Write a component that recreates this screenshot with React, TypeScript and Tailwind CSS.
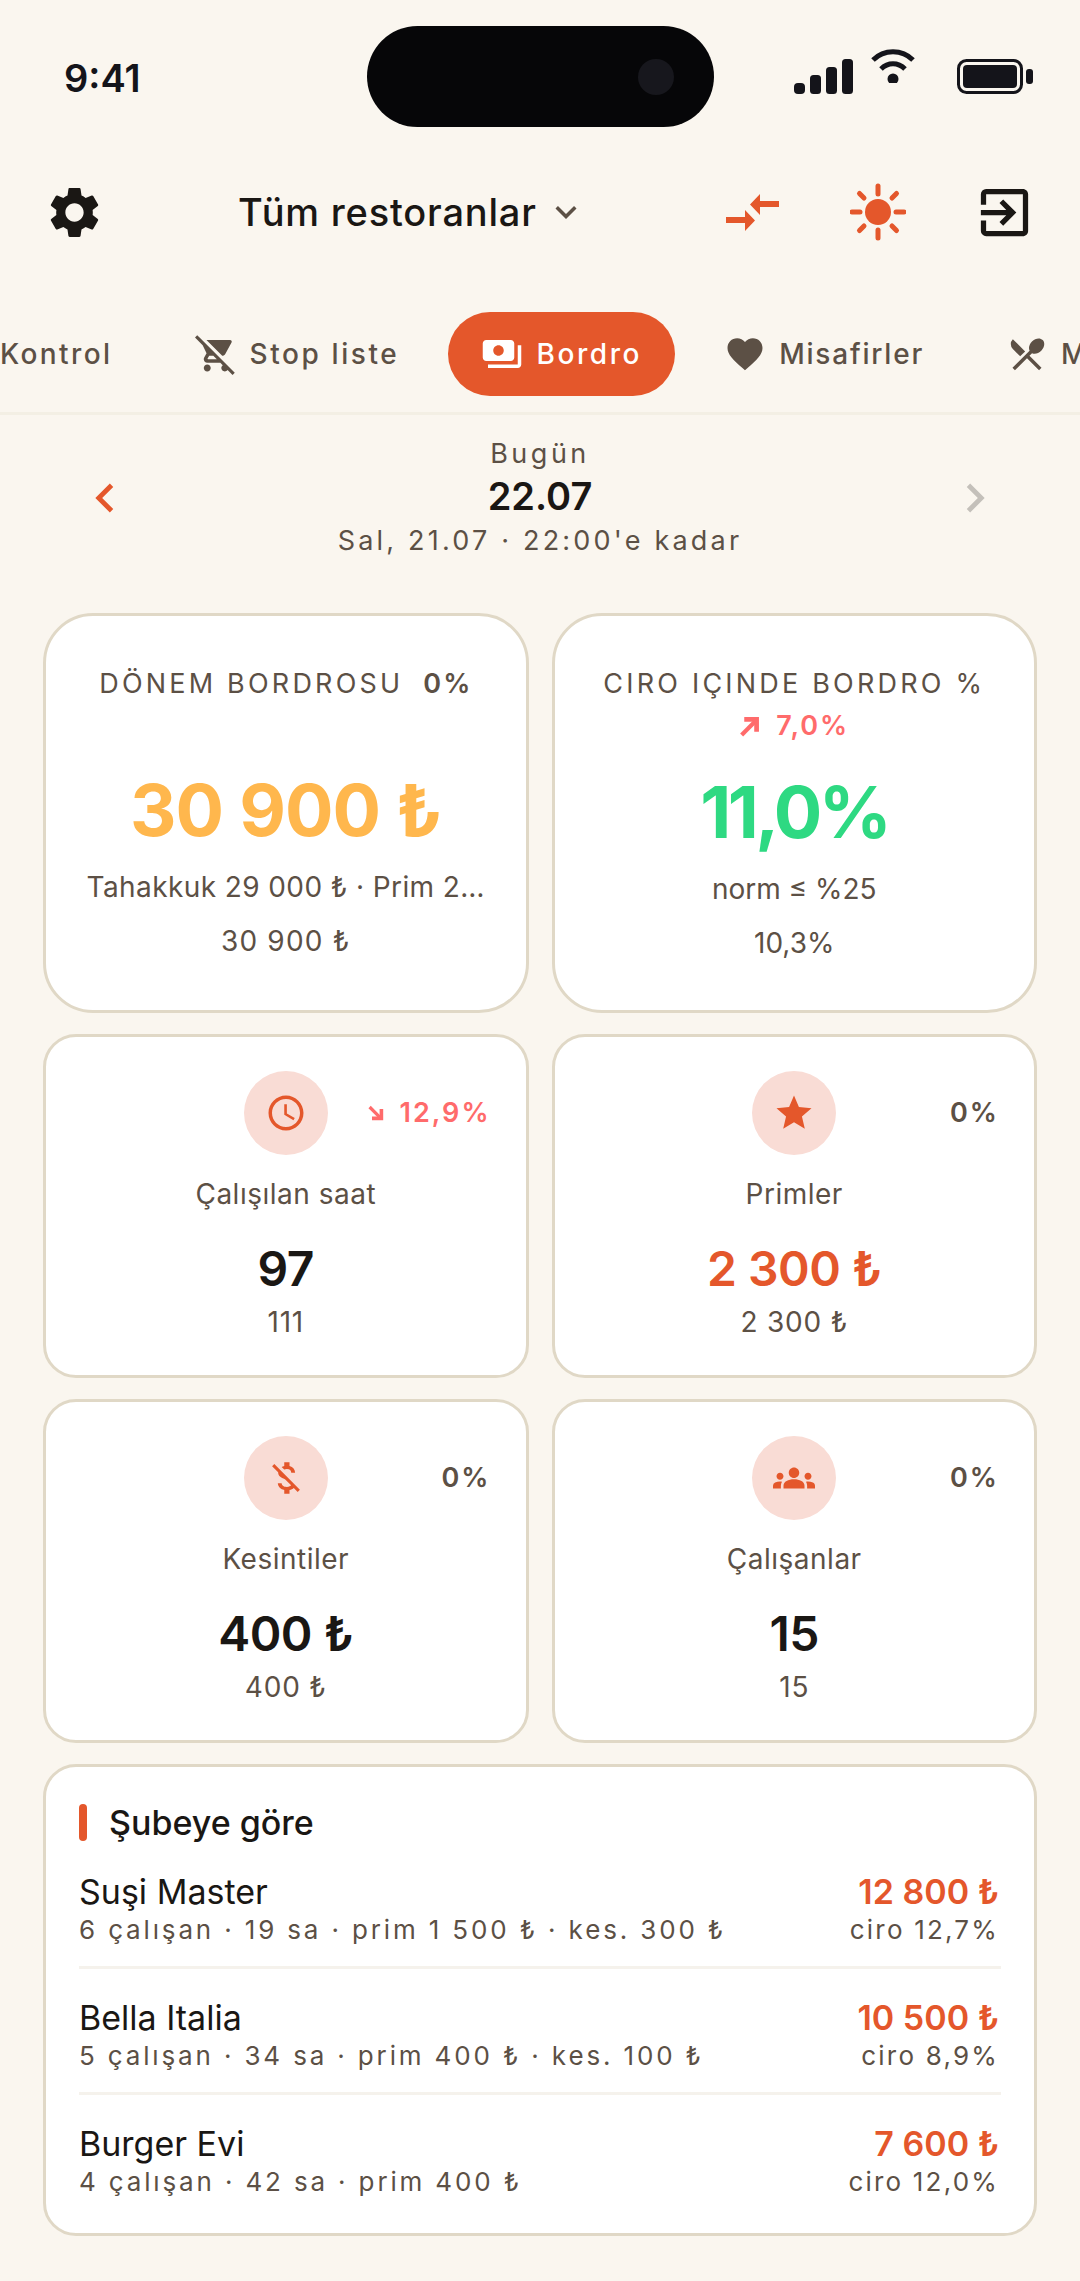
import {
  MdAccessTime,
  MdChevronLeft,
  MdChevronRight,
  MdExitToApp,
  MdFavorite,
  MdGroups,
  MdKeyboardArrowDown,
  MdMoneyOff,
  MdPayments,
  MdRemoveShoppingCart,
  MdRestaurantMenu,
  MdSettings,
  MdStar,
} from "react-icons/md";
import type { ReactNode } from "react";

const branches = [
  { name: "Suşi Master", meta: "6 çalışan · 19 sa · prim 1 500 ₺ · kes. 300 ₺", total: "12 800 ₺", share: "ciro 12,7%" },
  { name: "Bella Italia", meta: "5 çalışan · 34 sa · prim 400 ₺ · kes. 100 ₺", total: "10 500 ₺", share: "ciro 8,9%" },
  { name: "Burger Evi", meta: "4 çalışan · 42 sa · prim 400 ₺", total: "7 600 ₺", share: "ciro 12,0%" },
];

function StatusIcons() {
  return (
    <div className="flex items-start pt-[52px]">
      {/* signal */}
      <svg width="60" height="36" viewBox="0 0 60 36" className="mt-[7px] fill-[#14141a]">
        <rect x="0" y="24" width="11" height="11" rx="4" />
        <rect x="16" y="16" width="11" height="19" rx="3.5" />
        <rect x="32" y="8" width="11" height="27" rx="3.5" />
        <rect x="48" y="0" width="11" height="35" rx="3.5" />
      </svg>
      {/* wifi */}
      <svg width="44" height="36" viewBox="0 0 44 36" className="ml-[17px] mt-[-5px]">
        <path d="M2 13 C13 2 31 2 42 13" fill="none" stroke="#14141a" strokeWidth="5" />
        <path d="M10 22 C17 15 27 15 34 22" fill="none" stroke="#14141a" strokeWidth="5" />
        <circle cx="22" cy="32" r="5.5" fill="#14141a" />
      </svg>
      {/* battery */}
      <svg width="77" height="36" viewBox="0 0 77 36" className="ml-[42px] mt-[7px]">
        <rect x="1.5" y="1.5" width="63" height="32" rx="8" fill="none" stroke="#14141a" strokeWidth="3" />
        <rect x="6" y="6" width="54" height="23" rx="4" fill="#14141a" />
        <rect x="69" y="10" width="7" height="15" rx="3" fill="#14141a" />
      </svg>
    </div>
  );
}

function MergeArrows() {
  return (
    <svg width="54" height="40" viewBox="0 0 54 40" className="fill-[#e4572b]">
      <path d="M53 9H34V2L24 12.5 34 23v-8h19z" />
      <path d="M0 25h19v-7l10 10.5L19 39v-8H0z" />
    </svg>
  );
}

function SunIcon() {
  const rays = [
    [28, 2, 28, 10],
    [28, 46, 28, 54],
    [2, 28, 10, 28],
    [46, 28, 54, 28],
    [9.5, 9.5, 14, 14],
    [42, 42, 46.5, 46.5],
    [46.5, 9.5, 42, 14],
    [14, 42, 9.5, 46.5],
  ];
  return (
    <svg width="56" height="58" viewBox="0 0 56 56">
      <circle cx="28" cy="28" r="13" fill="#e4572b" />
      {rays.map((r) => (
        <line key={r.join()} x1={r[0]} y1={r[1]} x2={r[2]} y2={r[3]} stroke="#e4572b" strokeWidth="5" strokeLinecap="round" />
      ))}
    </svg>
  );
}

function TrendArrow({ dir, size }: { dir: "up" | "down"; size: number }) {
  return (
    <svg width={size} height={size} viewBox="0 0 20 20" className={dir === "down" ? "rotate-90" : ""}>
      <path d="M2.5 18 16 4.5" fill="none" stroke="#ff6b6b" strokeWidth="4" />
      <path d="M5 1h14v14h-4.5V5.5H5z" fill="#ff6b6b" />
    </svg>
  );
}

function Tab({
  icon,
  label,
  active,
  tracking = "tracking-[2.6px]",
}: {
  icon: ReactNode;
  label: string;
  active?: boolean;
  tracking?: string;
}) {
  return (
    <div
      className={`flex h-[84px] shrink-0 items-center gap-[13px] rounded-full px-[33px] text-[28px] font-medium ${tracking} ${
        active ? "bg-[#e4572b] text-white" : "text-[#5c5045]"
      }`}
    >
      {icon}
      <span>{label}</span>
    </div>
  );
}

function Delta({ dir, value, size = 16 }: { dir?: "up" | "down"; value: string; size?: number }) {
  return (
    <div
      className={`flex items-center justify-center gap-[16px] text-[27px] font-semibold tracking-[2px] ${
        dir ? "text-[#ff6b6b]" : "text-[#5c5045]"
      }`}
    >
      {dir && <TrendArrow dir={dir} size={size} />}
      <span>{value}</span>
    </div>
  );
}

function StatCard({
  icon,
  label,
  value,
  sub,
  delta,
  valueColor = "text-[#1a1714]",
}: {
  icon: ReactNode;
  label: string;
  value: string;
  sub: string;
  delta: ReactNode;
  valueColor?: string;
}) {
  return (
    <div className="relative flex h-[344px] flex-col items-center rounded-[33px] border-[3px] border-[#e0d8c6] bg-white pt-[34px]">
      <div className="absolute right-[35px] top-[56px]">{delta}</div>
      <div className="flex h-[84px] w-[84px] items-center justify-center rounded-full bg-[#f9dcd5] text-[#e4572b]">{icon}</div>
      <div className="mt-[21px] text-[28px] leading-[36px] tracking-[0.5px] text-[#5c5045]">{label}</div>
      <div className={`mt-[29px] text-[48px] font-semibold leading-[56px] tracking-[-0.5px] ${valueColor}`}>{value}</div>
      <div className="mt-[7px] text-[28px] leading-[36px] tracking-[0.8px] text-[#5c5045]">{sub}</div>
    </div>
  );
}

export default function App() {
  return (
    <div className="h-[2281px] w-[1080px] overflow-hidden bg-[#faf6ef] font-['Inter',sans-serif]">
      {/* Status bar */}
      <div className="flex h-[127px] items-start">
        <div className="w-[367px] pl-[64px] pt-[54px] text-[38px] font-semibold leading-[48px] text-[#14141a]">9:41</div>
        <div className="mt-[26px] flex h-[101px] w-[347px] items-center justify-end rounded-full bg-[#060608] pr-[40px]">
          <div className="h-[36px] w-[36px] rounded-full bg-[#17171d]" />
        </div>
        <div className="ml-[80px]">
          <StatusIcons />
        </div>
      </div>

      {/* Header */}
      <div className="mt-[35px] flex h-[100px] items-center">
        <MdSettings size={61} className="ml-[44px] text-[#1a1714]" />
        <div className="ml-[133px] text-[38px] font-medium tracking-[0.8px] text-[#1a1714]">Tüm restoranlar</div>
        <MdKeyboardArrowDown size={42} className="ml-[8px] text-[#5c5045]" />
        <div className="ml-[139px]">
          <MergeArrows />
        </div>
        <div className="ml-[70px]">
          <SunIcon />
        </div>
        <MdExitToApp size={63} className="ml-[67px] text-[#1a1714]" />
      </div>

      {/* Tabs */}
      <div className="mt-[50px] flex gap-[16px] overflow-hidden border-b-[3px] border-[#f3efe4] pb-[16px]">
        <div className="ml-[-33px]">
          <Tab label="Kontrol" tracking="tracking-[2.4px]" icon={null} />
        </div>
        <Tab label="Stop liste" icon={<MdRemoveShoppingCart size={42} />} />
        <Tab active label="Bordro" icon={<MdPayments size={42} />} />
        <Tab label="Misafirler" tracking="tracking-[1.8px]" icon={<MdFavorite size={42} />} />
        <Tab label="Menü" icon={<MdRestaurantMenu size={42} />} />
      </div>

      {/* Date switcher */}
      <div className="mt-[18px] flex h-[130px] items-center justify-between px-[76px]">
        <MdChevronLeft size={58} className="text-[#e4572b]" />
        <div className="flex flex-col items-center">
          <div className="text-[27px] leading-[38px] tracking-[3.5px] text-[#5c5045]">Bugün</div>
          <div className="text-[38px] font-semibold leading-[46px] text-[#1a1714]">22.07</div>
          <div className="mt-[2px] text-[27px] leading-[40px] tracking-[3.2px] text-[#5c5045]">Sal, 21.07 · 22:00'e kadar</div>
        </div>
        <MdChevronRight size={58} className="text-[#c4c0ba]" />
      </div>

      {/* Totals */}
      <div className="mt-[50px] grid grid-cols-2 gap-x-[23px] gap-y-[21px] px-[43px]">
        <div className="flex h-[400px] flex-col items-center rounded-[50px] border-[3px] border-[#e0d8c6] bg-white pt-[50px]">
          <div className="flex h-[36px] items-center gap-[20px] text-[27px] leading-[36px] tracking-[3.2px] text-[#5c5045]">
            <span>DÖNEM BORDROSU</span>
            <Delta value="0%" />
          </div>
          <div className="mt-[68px] text-[72px] font-bold leading-[80px] tracking-[-1px] text-[#ffb74d]">30 900 ₺</div>
          <div className="mt-[18px] whitespace-nowrap text-center text-[28px] leading-[38px] tracking-[0.4px] text-[#5c5045]">Tahakkuk 29 000 ₺ · Prim 2…</div>
          <div className="mt-[16px] text-[28px] leading-[38px] tracking-[1.2px] text-[#5c5045]">30 900 ₺</div>
        </div>
        <div className="flex h-[400px] flex-col items-center rounded-[50px] border-[3px] border-[#e0d8c6] bg-white pt-[50px]">
          <div className="h-[36px] text-[27px] leading-[36px] tracking-[3.2px] text-[#5c5045]">CIRO IÇINDE BORDRO %</div>
          <div className="mt-[4px]">
            <Delta dir="up" value="7,0%" size={21} />
          </div>
          <div className="mt-[25px] text-[72px] font-bold leading-[80px] tracking-[-3.5px] text-[#2ed982]">11,0%</div>
          <div className="mt-[18px] text-[28px] leading-[38px] text-[#5c5045]">norm ≤ %25</div>
          <div className="mt-[16px] text-[28px] leading-[38px] text-[#5c5045]">10,3%</div>
        </div>

        <StatCard
          icon={<MdAccessTime size={42} />}
          label="Çalışılan saat"
          value="97"
          sub="111"
          delta={<Delta dir="down" value="12,9%" />}
        />
        <StatCard
          icon={<MdStar size={42} />}
          label="Primler"
          value="2 300 ₺"
          sub="2 300 ₺"
          valueColor="text-[#e4572b]"
          delta={<Delta value="0%" />}
        />
        <StatCard icon={<MdMoneyOff size={42} />} label="Kesintiler" value="400 ₺" sub="400 ₺" delta={<Delta value="0%" />} />
        <StatCard icon={<MdGroups size={42} />} label="Çalışanlar" value="15" sub="15" delta={<Delta value="0%" />} />

        {/* Per branch breakdown */}
        <div className="col-span-2 h-[472px] rounded-[33px] border-[3px] border-[#e0d8c6] bg-white px-[33px] pt-[36px]">
          <div className="flex h-[38px] items-center gap-[22px]">
            <div className="h-[37px] w-[8px] rounded-full bg-[#e4572b]" />
            <div className="text-[34px] font-medium text-[#1a1714]">Şubeye göre</div>
          </div>
          <div className="mt-[2px]">
            {branches.map((b, i) => (
              <div
                key={b.name}
                className={`flex items-start justify-between pb-[18px] pt-[29px] ${
                  i < branches.length - 1 ? "border-b-[3px] border-[#f5f2ec]" : ""
                }`}
              >
                <div>
                  <div className="text-[34px] leading-[40px] text-[#1a1714]">{b.name}</div>
                  <div className="text-[26px] leading-[36px] tracking-[2.85px] text-[#5c5045]">{b.meta}</div>
                </div>
                <div className="flex flex-col items-end pr-[2px]">
                  <div className="text-[34px] font-semibold leading-[40px] text-[#e4572b]">{b.total}</div>
                  <div className="text-[26px] leading-[36px] tracking-[2.2px] text-[#5c5045]">{b.share}</div>
                </div>
              </div>
            ))}
          </div>
        </div>
      </div>
    </div>
  );
}
